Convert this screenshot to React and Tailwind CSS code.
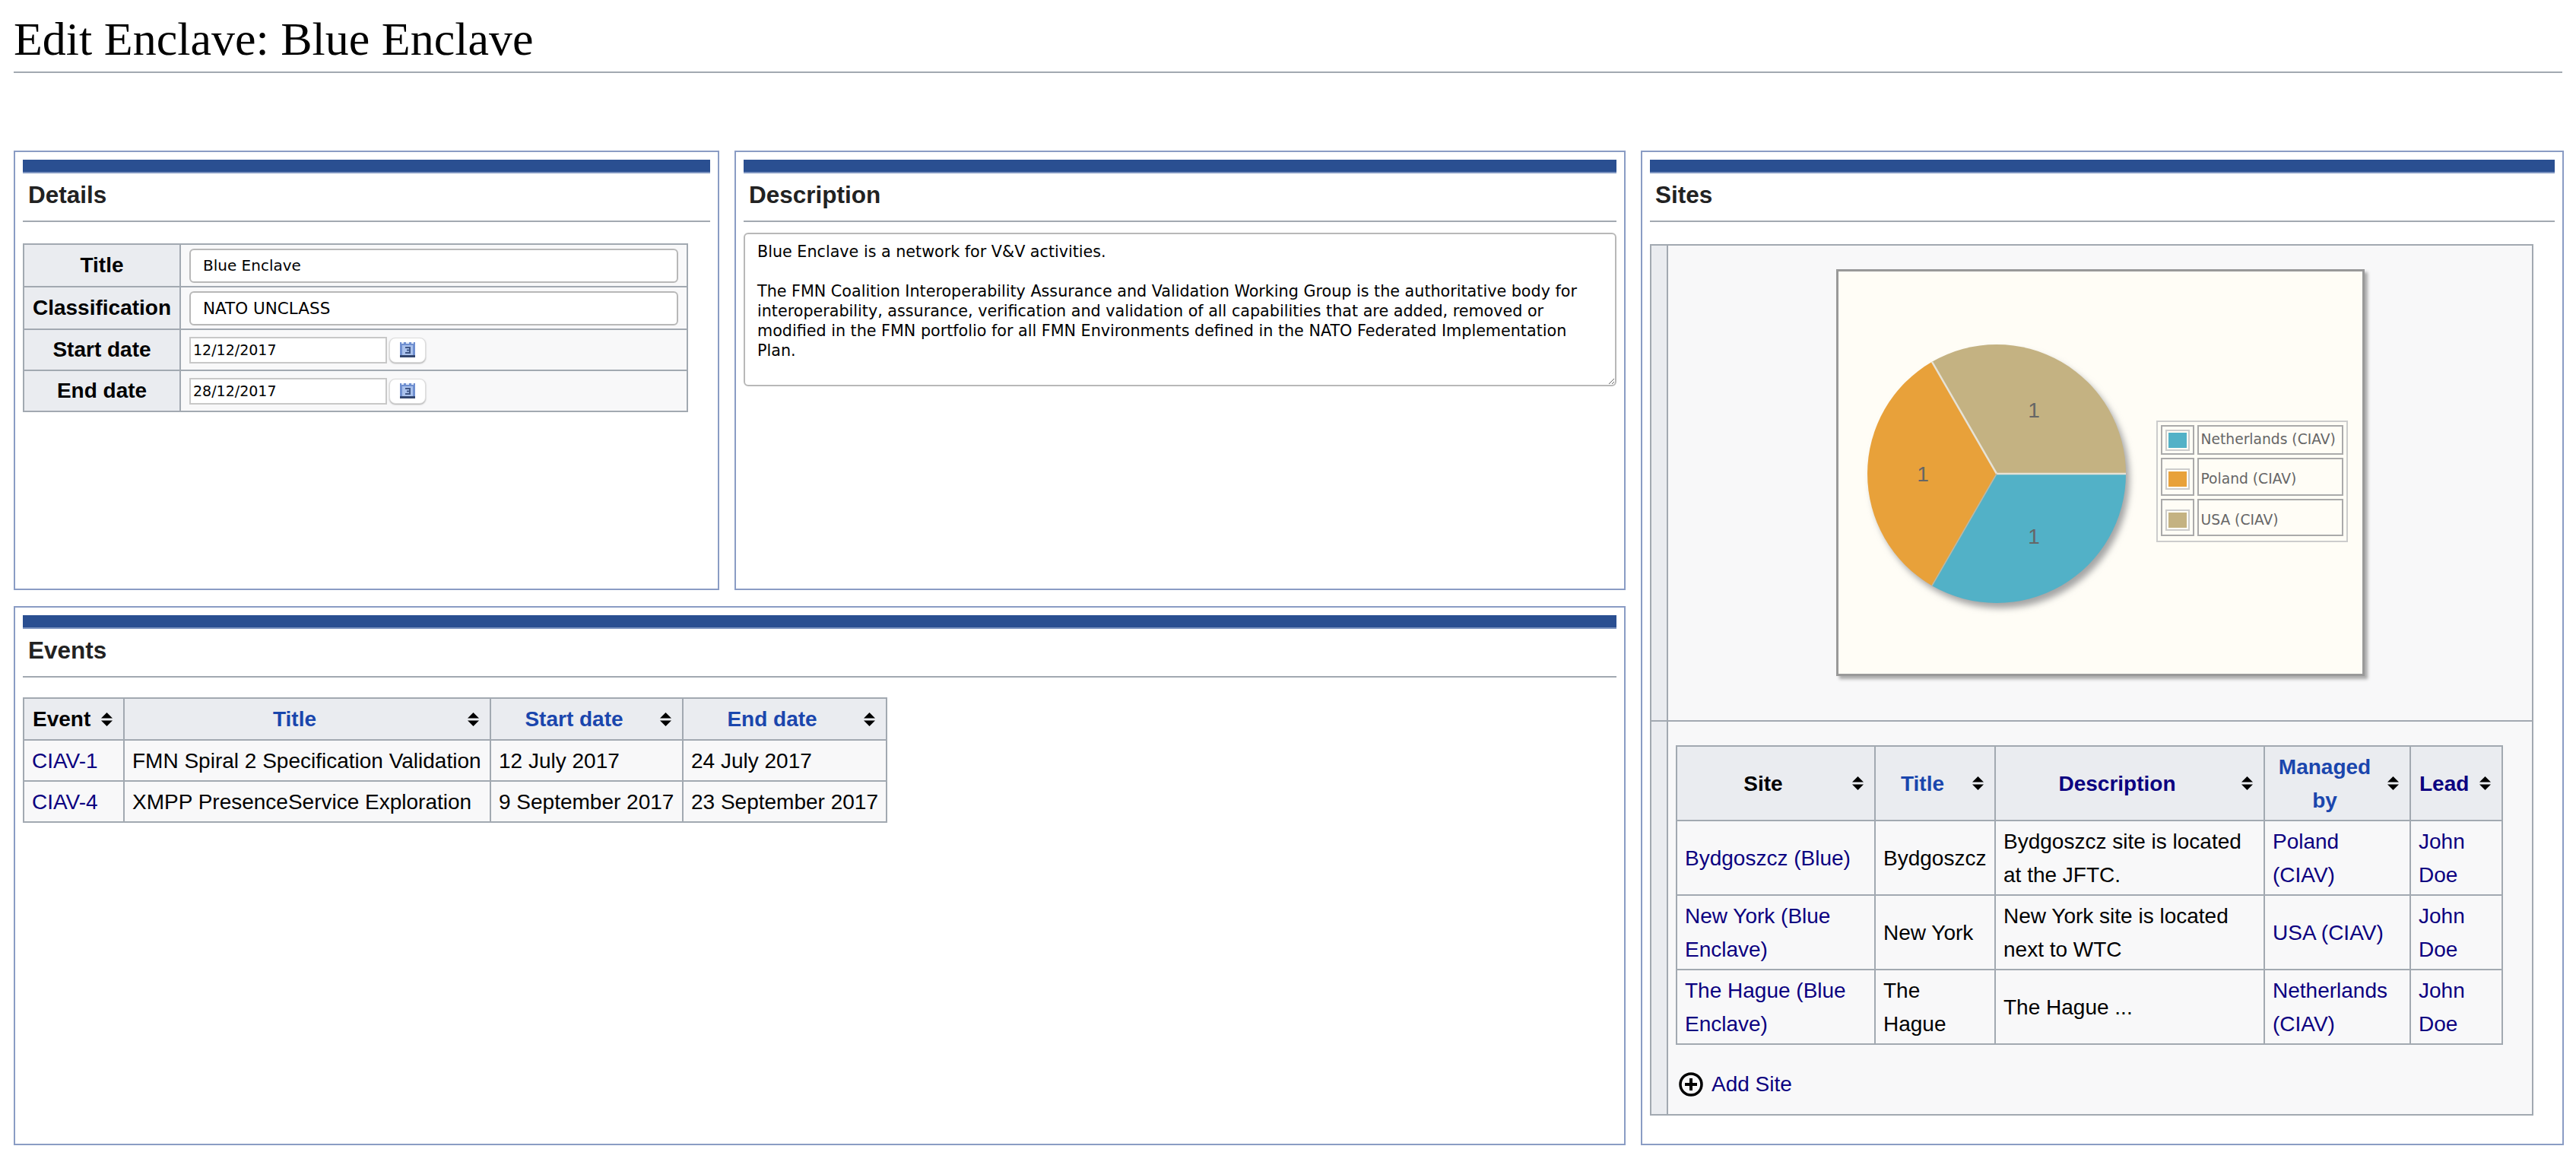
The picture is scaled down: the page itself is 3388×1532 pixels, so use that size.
const EVENTS = [
  { id: "CIAV-1", title: "FMN Spiral 2 Specification Validation", start: "12 July 2017", end: "24 July 2017" },
  { id: "CIAV-4", title: "XMPP PresenceService Exploration", start: "9 September 2017", end: "23 September 2017" },
];

const SITES = [
  { site: "Bydgoszcz (Blue)", title: "Bydgoszcz", desc: "Bydgoszcz site is located at the JFTC.", by: "Poland (CIAV)" },
  { site: "New York (Blue Enclave)", title: "New York", desc: "New York site is located next to WTC", by: "USA (CIAV)" },
  { site: "The Hague (Blue Enclave)", title: "The Hague", desc: "The Hague ...", by: "Netherlands (CIAV)" },
];

const LEGEND = [
  { label: "Netherlands (CIAV)", swatch: "bg-[#52b1c7]", row: "h-[39px]", shift: "pt-0" },
  { label: "Poland (CIAV)", swatch: "bg-[#e8a13a]", row: "h-[50px]", shift: "pt-[6px]" },
  { label: "USA (CIAV)", swatch: "bg-[#c4b282]", row: "h-[49px]", shift: "pt-[7px]" },
];

const DESCRIPTION =
  "Blue Enclave is a network for V&V activities.\n\nThe FMN Coalition Interoperability Assurance and Validation Working Group is the authoritative body for interoperability, assurance, verification and validation of all capabilities that are added, removed or modified in the FMN portfolio for all FMN Environments defined in the NATO Federated Implementation Plan.";

const thCell = "relative border-2 border-[#a2a9b1] bg-[#eaecf0] font-bold text-center pl-[11px] pr-[44px] pt-[1px]";
const tdCell = "border-2 border-[#a2a9b1] bg-[#f8f8f9] px-[10px] pt-[1px] font-normal";
const labelCell = "border-2 border-[#a2a9b1] bg-[#eaecf0] font-bold text-center";
const uiFont = "font-['DejaVu_Sans',sans-serif] text-black";

function SortIcon() {
  return (
    <svg className="absolute right-[13px] top-1/2 -translate-y-1/2" width="17" height="18" viewBox="0 0 17 18">
      <path d="M8.5 0L16 7.5H1z" fill="#000" />
      <path d="M8.5 18L1 10.5h15z" fill="#000" />
    </svg>
  );
}

function SortTh({ children, color = "text-black" }) {
  return (
    <th className={thCell + " " + color}>
      {children}
      <SortIcon />
    </th>
  );
}

function Panel({ title, className, children }) {
  return (
    <section className={"border-2 border-[#8a9cc4] bg-white px-[10px] pt-[10px] " + className}>
      <div className="h-[18px] border-b-2 border-[#7d94c0] bg-[#2a4f91]" />
      <h2 className="flex h-[64px] items-center border-b-2 border-[#a2a9b1] pb-[5px] pl-[7px] text-[31.5px] font-bold text-[#222]">
        {title}
      </h2>
      {children}
    </section>
  );
}

function CalendarIcon() {
  return (
    <svg width="20" height="20" viewBox="0 0 20 20">
      <rect width="20" height="20" fill="#6f8fd0" />
      <rect x="2" y="0" width="3" height="2" fill="#dfe8f8" />
      <rect x="8" y="0" width="4" height="2" fill="#dfe8f8" />
      <rect x="15" y="0" width="3" height="2" fill="#dfe8f8" />
      <rect x="3" y="4" width="14" height="13" fill="#a9c1ec" />
      <path d="M7 7h6v7H7M9 10.5h4" fill="none" stroke="#3f5685" strokeWidth="2" />
      <rect y="17" width="20" height="3" fill="#33466e" />
    </svg>
  );
}

function TextRow({ label, value, height, size }) {
  return (
    <tr className={height}>
      <th className={labelCell}>{label}</th>
      <td className="border-2 border-[#a2a9b1] bg-[#f8f8f9] pl-[11px] pr-[11px]">
        <input
          readOnly
          value={value}
          className={"block h-[45px] w-full rounded-[6px] border-2 border-[#b8b8b8] bg-white pl-4 outline-none " + size + " " + uiFont}
        />
      </td>
    </tr>
  );
}

function DateRow({ label, value, height }) {
  return (
    <tr className={height}>
      <th className={labelCell}>{label}</th>
      <td className="border-2 border-[#a2a9b1] bg-[#f8f8f9] pl-[11px]">
        <div className="flex items-center gap-[3px]">
          <input
            readOnly
            value={value}
            className={"block h-[35px] w-[260px] border-2 border-[#c8c8c8] bg-white pl-[3px] text-[19px] outline-none " + uiFont}
          />
          <button className="flex h-[33px] w-[48px] items-center justify-center rounded-[8px] border border-[#ddd] bg-white shadow-[0_1px_2px_#aaa]">
            <CalendarIcon />
          </button>
        </div>
      </td>
    </tr>
  );
}

function PieChart() {
  return (
    <svg width="418" height="529" viewBox="0 0 418 529" className="shrink-0">
      <defs>
        <filter id="pie-shadow" x="-20%" y="-20%" width="140%" height="140%">
          <feGaussianBlur stdDeviation="4" />
        </filter>
      </defs>
      <circle cx="213" cy="273" r="170" fill="#a5a5a5" filter="url(#pie-shadow)" />
      <path d="M208 266L378 266A170 170 0 0 1 123 413.2Z" fill="#52b1c7" />
      <path d="M208 266L123 413.2A170 170 0 0 1 123 118.8Z" fill="#e8a13a" />
      <path d="M208 266L123 118.8A170 170 0 0 1 378 266Z" fill="#c4b282" />
      <path d="M123 118.8L208 266L378 266" fill="none" stroke="#e6e2d6" strokeWidth="2.5" />
      <path d="M208 266L123 413.2" fill="none" stroke="#b9b9a8" strokeWidth="1.5" />
      <g fill="#666" fontSize="28" fontFamily="Liberation Sans, sans-serif" textAnchor="middle">
        <text x="257" y="192">1</text>
        <text x="111" y="276">1</text>
        <text x="257" y="358">1</text>
      </g>
    </svg>
  );
}

function Legend() {
  return (
    <div className="mt-[196px] flex h-[160px] w-[252px] flex-col gap-[4px] border-2 border-[#ccc] p-[4px] font-['DejaVu_Sans',sans-serif] text-[18.7px] text-[#666]">
      {LEGEND.map(({ label, swatch, row, shift }) => (
        <div key={label} className={"flex gap-[4px] " + row}>
          <div className={"flex w-[44px] items-center justify-center border-2 border-[#aaa] " + shift}>
            <div className="border-2 border-[#ccc] p-[2px]">
              <div className={"h-[20px] w-[24px] " + swatch} />
            </div>
          </div>
          <div className={"flex flex-1 items-center border-2 border-[#aaa] pl-[3px] leading-none whitespace-nowrap " + shift}>
            {label}
          </div>
        </div>
      ))}
    </div>
  );
}

function EventsTable() {
  return (
    <table className="mt-[26px] w-[1135px] table-fixed border-collapse text-[28px] leading-[44px]">
      <colgroup>
        <col className="w-[132px]" />
        <col className="w-[482px]" />
        <col className="w-[253px]" />
        <col className="w-[268px]" />
      </colgroup>
      <thead>
        <tr className="h-[55px]">
          <SortTh>Event</SortTh>
          <SortTh color="text-[#1a46ad]">Title</SortTh>
          <SortTh color="text-[#1a46ad]">Start date</SortTh>
          <SortTh color="text-[#1a46ad]">End date</SortTh>
        </tr>
      </thead>
      <tbody>
        {EVENTS.map((ev) => (
          <tr key={ev.id} className="h-[54px]">
            <td className={tdCell + " text-[#0b0080]"}>{ev.id}</td>
            <td className={tdCell + " whitespace-nowrap"}>{ev.title}</td>
            <td className={tdCell + " whitespace-nowrap"}>{ev.start}</td>
            <td className={tdCell + " whitespace-nowrap"}>{ev.end}</td>
          </tr>
        ))}
      </tbody>
    </table>
  );
}

function SitesTable() {
  return (
    <table className="w-[1086px] table-fixed border-collapse text-[28px] leading-[44px]">
      <colgroup>
        <col className="w-[261px]" />
        <col className="w-[158px]" />
        <col className="w-[354px]" />
        <col className="w-[192px]" />
        <col className="w-[121px]" />
      </colgroup>
      <thead>
        <tr className="h-[98px]">
          <SortTh>Site</SortTh>
          <SortTh color="text-[#1a46ad]">Title</SortTh>
          <SortTh color="text-[#0b0080]">Description</SortTh>
          <SortTh color="text-[#1a46ad]">Managed by</SortTh>
          <SortTh color="text-[#0b0080]">Lead</SortTh>
        </tr>
      </thead>
      <tbody>
        {SITES.map((s) => (
          <tr key={s.site} className="h-[98px]">
            <td className={tdCell + " text-[#0b0080]"}>{s.site}</td>
            <td className={tdCell}>{s.title}</td>
            <td className={tdCell}>{s.desc}</td>
            <td className={tdCell + " text-[#0b0080]"}>{s.by}</td>
            <td className={tdCell + " text-[#0b0080]"}>John Doe</td>
          </tr>
        ))}
      </tbody>
    </table>
  );
}

export default function App() {
  return (
    <div className="w-[3388px] h-[1532px] bg-white pl-[18px] font-['Liberation_Sans',Arial,sans-serif] text-black">
      <h1 className="h-[96px] w-[3352px] border-b-2 border-[#a2a9b1] pt-[18px] font-['Liberation_Serif',serif] text-[62px] leading-[66px] text-black">
        Edit Enclave: Blue Enclave
      </h1>

      <div className="mt-[102px] flex gap-[20px]">
        {/* Left column */}
        <div className="flex w-[2120px] flex-col gap-[21px]">
          <div className="flex gap-[20px]">
            <Panel title="Details" className="h-[578px] w-[928px]">
              <table className="mt-[28px] w-[873px] table-fixed border-collapse text-[28px]">
                <colgroup>
                  <col className="w-[206px]" />
                  <col className="w-[667px]" />
                </colgroup>
                <tbody>
                  <TextRow label="Title" value="Blue Enclave" height="h-[56px]" size="text-[20px]" />
                  <TextRow label="Classification" value="NATO UNCLASS" height="h-[56px]" size="text-[21.5px]" />
                  <DateRow label="Start date" value="12/12/2017" height="h-[54px]" />
                  <DateRow label="End date" value="28/12/2017" height="h-[54px]" />
                </tbody>
              </table>
            </Panel>

            <Panel title="Description" className="h-[578px] w-[1172px]">
              <textarea
                readOnly
                defaultValue={DESCRIPTION}
                className={"mt-[14px] block h-[202px] w-full rounded-[6px] border-2 border-[#b8b8b8] bg-white pl-4 pr-4 pt-[10px] text-[20.7px] leading-[26px] outline-none " + uiFont}
              />
            </Panel>
          </div>

          <Panel title="Events" className="h-[709px] w-full">
            <EventsTable />
          </Panel>
        </div>

        {/* Right column */}
        <Panel title="Sites" className="h-[1308px] w-[1214px]">
          <table className="mt-[29px] w-[1162px] table-fixed border-collapse">
            <colgroup>
              <col className="w-[22px]" />
              <col />
            </colgroup>
            <tbody>
              <tr className="h-[626px]">
                <th className="border-2 border-[#a2a9b1] bg-[#eaecf0]" />
                <td className="border-2 border-[#a2a9b1] bg-[#f8f8f9] pt-[31px] align-top">
                  <div className="mx-auto flex h-[535px] w-[695px] border-[3px] border-[#999] bg-[#fffdf6] shadow-[4px_4px_4px_#aaa]">
                    <PieChart />
                    <Legend />
                  </div>
                </td>
              </tr>
              <tr className="h-[518px]">
                <th className="border-2 border-[#a2a9b1] bg-[#eaecf0]" />
                <td className="border-2 border-[#a2a9b1] bg-[#f8f8f9] pl-[10px] pt-[31px] align-top">
                  <SitesTable />
                  <div className="mt-[30px] flex items-center gap-[11px] pl-[4px] text-[28px] leading-[44px] text-[#0b0080]">
                    <svg width="32" height="32" viewBox="0 0 32 32" className="shrink-0">
                      <circle cx="16" cy="16" r="14" fill="none" stroke="#000" strokeWidth="3.5" />
                      <path d="M16 8v16M8 16h16" stroke="#000" strokeWidth="4" />
                    </svg>
                    Add Site
                  </div>
                </td>
              </tr>
            </tbody>
          </table>
        </Panel>
      </div>
    </div>
  );
}
